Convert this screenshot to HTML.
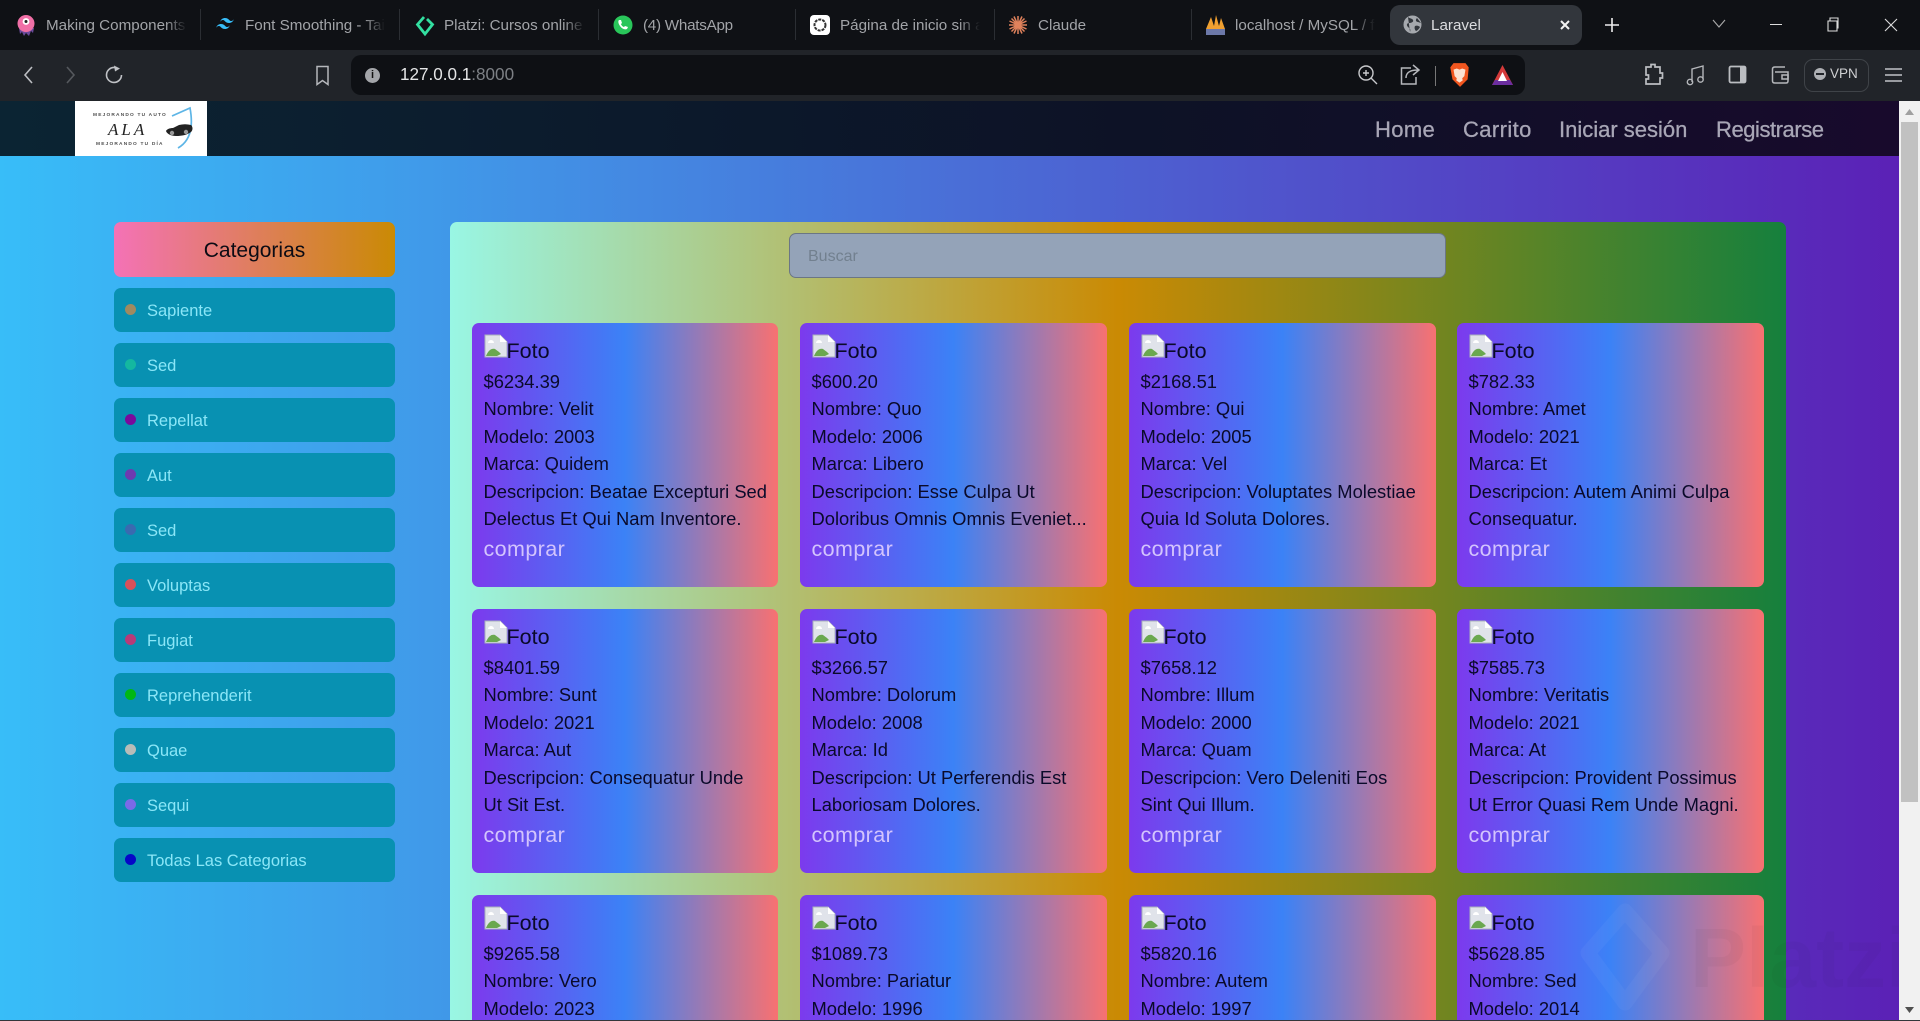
<!DOCTYPE html>
<html lang="es"><head><meta charset="utf-8"><title>Laravel</title>
<style>
*{box-sizing:border-box;margin:0;padding:0}
html,body{width:1920px;height:1021px;overflow:hidden;background:#111317;font-family:"Liberation Sans",sans-serif}
.a{position:absolute}
#tabs{left:0;top:0;width:1920px;height:50px;background:#0f1115}
.tt{position:absolute;top:17px;font-size:15.2px;line-height:18px;color:#a2a4a8;white-space:nowrap;overflow:hidden;height:19px;font-weight:normal}
.fd{-webkit-mask-image:linear-gradient(90deg,#000 85%,transparent);mask-image:linear-gradient(90deg,#000 85%,transparent)}
.sep{position:absolute;top:9px;width:1px;height:31px;background:#2b2e33}
#bar{left:0;top:50px;width:1920px;height:51px;background:#212429}
#url{left:351px;top:5px;width:1174px;height:40px;background:#0e1014;border-radius:10px}
#page{left:0;top:101px;width:1899px;height:919px;overflow:hidden;background:linear-gradient(90deg,#38bdf8,#5b21b6)}
#nav{left:0;top:0;width:1899px;height:55px;background:linear-gradient(90deg,#0b2433,#0d1226 60%,#180a2c)}
.nl{position:absolute;top:15px;font-size:22px;line-height:27px;color:#a8a6b6;white-space:nowrap;-webkit-text-stroke:.3px #a8a6b6}
#cath{left:114px;top:121px;width:281px;height:55px;border-radius:7px;background:linear-gradient(90deg,#f472b6,#ca8a04);text-align:center;font-size:21px;line-height:57px;color:#0b0b14}
.cat{position:absolute;left:114px;width:281px;height:44px;border-radius:7px;background:#0891b2;color:#8ae6f7;font-size:16.5px;line-height:46px;padding-left:33px}
.cat i{position:absolute;left:11px;top:16px;width:11px;height:11px;border-radius:50%}
#main{left:450px;top:121px;width:1336px;height:798px;overflow:hidden;border-radius:7px 7px 0 0;background:linear-gradient(90deg,#99f6e4,#ca8a04 50%,#15803d)}
#search{left:339px;top:11px;width:657px;height:45px;border-radius:7px;border:1px solid #6b7684;background:#94a3b8;color:#72808f;font-size:16px;line-height:45px;padding-left:18px}
.c{position:absolute;width:307px;height:264px;border-radius:7px;background:linear-gradient(90deg,#7c3aed,#3b82f6 50%,#f87171);color:#0a0a2a;font-size:18.35px;line-height:27.5px;padding:11px 0 0 11.5px;overflow:hidden;white-space:nowrap}
.c.l{width:306px}
.c.t{height:125px;border-radius:7px 7px 0 0}
.c .f{display:block;height:33px;font-size:21.5px;line-height:35px;position:relative;margin-bottom:.8px}
.c .f svg{position:absolute;left:0;top:0}
.c .f span{margin-left:23px}
.c .p{display:block;height:27.5px}
.c.t .p:last-child{height:24px}
.c b{display:block;font-weight:normal;font-size:21.5px;line-height:33px;color:#d3c4fd;letter-spacing:.4px}
#sb{left:1899px;top:101px;width:21px;height:919px;background:#f1f1f1}
#th{left:2px;top:21px;width:17px;height:680px;background:#c1c1c1}
#btm{left:0;top:1020px;width:1920px;height:1px;background:#33363a}
</style></head><body>

<div class="a" id="tabs">
<svg class="a" style="left:16px;top:14px" width="20" height="23" viewBox="0 0 20 23"><path d="M3 14l1 6 2-2 2 4 2-3 3 3 2-5 2 2 1-5z" fill="#6a4a9a"/><circle cx="10" cy="9.500" r="8.500" fill="#f06fa6"/><circle cx="10" cy="7.500" r="3.400" fill="#fff"/><circle cx="10" cy="7.500" r="1.500" fill="#222"/></svg>
<div class="tt fd" style="left:46px;width:141px">Making Components</div><div class="sep" style="left:200px"></div>
<svg class="a" style="left:215px;top:17px" width="20" height="16" viewBox="0 0 20 16"><path d="M5 5c1-3 3-4 5-4 4 0 4 3 6 3 1.500 0 2.500-1 3-2-1 3-3 4-5 4-4 0-4-3-6-3-1.500 0-2.500 1-3 2zM1 11c1-3 3-4 5-4 4 0 4 3 6 3 1.500 0 2.500-1 3-2-1 3-3 4-5 4-4 0-4-3-6-3-1.500 0-2.500 1-3 2z" fill="#38bdf8"/></svg>
<div class="tt fd" style="left:245px;width:140px">Font Smoothing - Tail</div><div class="sep" style="left:399px"></div>
<svg class="a" style="left:415px;top:14px" width="20" height="23" viewBox="0 0 20 23"><path d="M9 3L2.500 10.500 10 20l7.500-9.500L12 5" fill="none" stroke="#33e0a1" stroke-width="2.800"/></svg>
<div class="tt fd" style="left:444px;width:141px">Platzi: Cursos online p</div><div class="sep" style="left:598px"></div>
<svg class="a" style="left:613px;top:15px" width="20" height="20" viewBox="0 0 20 20"><circle cx="10" cy="10" r="9.500" fill="#29c65a"/><path d="M6 5c-1 1-1 3 1 6s5 4 7 3l1-2-3-1-1 1c-1 0-3-2-3-3l1-1-1-3z" fill="#fff"/></svg>
<div class="tt" style="left:643px;width:100px;letter-spacing:-.25px">(4) WhatsApp</div><div class="sep" style="left:795px"></div>
<div class="a" style="left:810px;top:15px;width:20px;height:20px;border-radius:4px;background:#fff"></div>
<svg class="a" style="left:812px;top:17px" width="16" height="16" viewBox="0 0 16 16"><circle cx="8" cy="8" r="5.500" fill="none" stroke="#333" stroke-width="2" stroke-dasharray="3 1"/></svg>
<div class="tt fd" style="left:840px;width:140px">Página de inicio sin a</div><div class="sep" style="left:994px"></div>
<svg class="a" style="left:1008px;top:15px" width="20" height="20" viewBox="0 0 20 20"><path d="M10 1v18M1 10h18M3.500 3.500l13 13M16.500 3.500l-13 13M6 1.500l8 17M14 1.500l-8 17M1.500 6l17 8M18.500 6l-17 8" stroke="#e0825c" stroke-width="1.500"/></svg>
<div class="tt" style="left:1038px;width:60px">Claude</div><div class="sep" style="left:1191px"></div>
<svg class="a" style="left:1205px;top:14px" width="21" height="22" viewBox="0 0 21 22"><path d="M1 15L6 3l3 9 2-11 3 11 2-8 4 11z" fill="#f0a030"/><rect x="1" y="15" width="19" height="6" fill="#6c78a8"/></svg>
<div class="tt fd" style="left:1235px;width:140px">localhost / MySQL / f</div>
<div class="a" style="left:1390px;top:5px;width:192px;height:40px;border-radius:10px;background:#32363c"></div>
<svg class="a" style="left:1403px;top:15px" width="19" height="19" viewBox="0 0 19 19"><circle cx="9.500" cy="9.500" r="9" fill="#a6a9ae"/><path d="M5 2c2 2 4 1 5 3s-2 3-4 3-3 2-1 4 3 2 2 5M14 3c-2 2-1 4 1 4l3 1M12 11c2-1 4 0 5 1-1 2-3 4-4 4-1-1-2-3-1-5z" fill="#32363c"/></svg>
<div class="tt" style="left:1431px;color:#dcdde0">Laravel</div>
<svg class="a" style="left:1559px;top:19px" width="12" height="12" viewBox="0 0 12 12"><path d="M2 2l8 8M10 2l-8 8" stroke="#f2f2f2" stroke-width="2"/></svg>
<svg class="a" style="left:1604px;top:17px" width="16" height="16" viewBox="0 0 16 16"><path d="M8 1v14M1 8h14" stroke="#eee" stroke-width="1.600"/></svg>
<svg class="a" style="left:1712px;top:19px" width="14" height="10" viewBox="0 0 14 10"><path d="M1 1l6 7 6-7" fill="none" stroke="#aaa" stroke-width="1.100"/></svg>
<div class="a" style="left:1770px;top:24px;width:12px;height:1px;background:#ddd"></div>
<svg class="a" style="left:1826px;top:17px" width="14" height="15" viewBox="0 0 14 15"><path d="M2 4h9v10H2zM4 4V1h8v10h-1" fill="none" stroke="#ddd" stroke-width="1.100"/></svg>
<svg class="a" style="left:1884px;top:18px" width="14" height="14" viewBox="0 0 14 14"><path d="M1 1l12 12M13 1L1 13" stroke="#ddd" stroke-width="1.100"/></svg>
</div>

<div class="a" id="bar">
<svg class="a" style="left:21px;top:14px" width="14" height="22" viewBox="0 0 14 22"><path d="M11 3L4 11l7 8" fill="none" stroke="#bcbec2" stroke-width="1.600"/></svg>
<svg class="a" style="left:64px;top:14px" width="14" height="22" viewBox="0 0 14 22"><path d="M3 3l7 8-7 8" fill="none" stroke="#55585d" stroke-width="1.600"/></svg>
<svg class="a" style="left:104px;top:15px" width="20" height="20" viewBox="0 0 20 20"><path d="M11 2.500A7.500 7.500 0 1 0 17.500 10" fill="none" stroke="#c0c2c6" stroke-width="1.600"/><path d="M10 .5l6 3-5 3z" fill="#c0c2c6"/></svg>
<svg class="a" style="left:315px;top:15px" width="15" height="21" viewBox="0 0 15 21"><path d="M2 1.500h11v18l-5.500-4-5.500 4z" fill="none" stroke="#b5b7bb" stroke-width="1.500"/></svg>
<div class="a" id="url">
<div class="a" style="left:14px;top:13px;width:15px;height:15px;border-radius:50%;background:#a3a5a9;color:#111;font:bold 11px/15px 'Liberation Sans',sans-serif;text-align:center">i</div>
<div class="a" style="left:49px;top:10px;font-size:17.1px;line-height:20px;color:#e4e5e6;white-space:nowrap">127.0.0.1<span style="color:#7d8085">:8000</span></div>
</div>
<svg class="a" style="left:1357px;top:14px" width="21" height="22" viewBox="0 0 21 22"><circle cx="9" cy="9" r="7" fill="none" stroke="#c8c9cc" stroke-width="1.400"/><path d="M14 14l6 6M9 6v6M6 9h6" stroke="#c8c9cc" stroke-width="1.400"/></svg>
<svg class="a" style="left:1399px;top:14px" width="22" height="22" viewBox="0 0 22 22"><path d="M12 4H2.500v16H17v-7M7 14c0-5 3-8 12-8M14 1l6 5-6 5" fill="none" stroke="#b5b7bb" stroke-width="1.500"/></svg>
<div class="a" style="left:1435px;top:16px;width:1px;height:20px;background:#777"></div>
<svg class="a" style="left:1449px;top:12px" width="21" height="26" viewBox="0 0 19 24"><path d="M4 1h11l3 4-1 11-7 7-7-7L1 5z" fill="#f1561f"/><path d="M4 7l3-1 2.500 1L12 6l3 1-1 6-2 2 .5 2-3 2-3-2 .5-2-2-2z" fill="#fbe2d2"/></svg>
<svg class="a" style="left:1491px;top:14px" width="23" height="22" viewBox="0 0 23 22"><path d="M11.500 1L22 21H1z" fill="#d33a3a"/><path d="M1 21h21l-3-5H4z" fill="#6b2ea0"/><path d="M11.500 8l4.500 9H7z" fill="#fff"/></svg>
<svg class="a" style="left:1643px;top:13px" width="21" height="23" viewBox="0 0 21 23"><path d="M3 4h5V1.500h4V4h5v6h2.500v5H17v6H3v-5h2.500v-4H3z" fill="none" stroke="#bbbdc1" stroke-width="1.700"/></svg>
<svg class="a" style="left:1686px;top:14px" width="19" height="22" viewBox="0 0 19 22"><path d="M6 18V5l11-3v13" fill="none" stroke="#b5b7bb" stroke-width="1.400"/><circle cx="4" cy="18" r="2.700" fill="none" stroke="#b5b7bb" stroke-width="1.400"/><circle cx="14.500" cy="15.500" r="2.700" fill="none" stroke="#b5b7bb" stroke-width="1.400"/></svg>
<svg class="a" style="left:1728px;top:15px" width="19" height="20" viewBox="0 0 19 20"><rect x="1.500" y="1.500" width="16" height="16" rx="1.500" fill="none" stroke="#bbbdc1" stroke-width="1.800"/><rect x="12" y="2" width="5" height="15" fill="#bbbdc1"/></svg>
<svg class="a" style="left:1771px;top:15px" width="19" height="20" viewBox="0 0 19 20"><path d="M14 2H4Q1.500 2 1.500 4v12q0 2 2.500 2h11q2 0 2-2V7H4" fill="none" stroke="#b5b7bb" stroke-width="1.500"/><rect x="11" y="10" width="6" height="4" fill="none" stroke="#b5b7bb" stroke-width="1.500"/></svg>
<div class="a" style="left:1804px;top:9px;width:65px;height:33px;border:1px solid #3f4348;border-radius:9px"></div>
<div class="a" style="left:1814px;top:18px;width:12px;height:12px;border-radius:50%;background:#aeb0b4"></div><div class="a" style="left:1816px;top:23px;width:8px;height:2px;background:#212429"></div>
<div class="a" style="left:1830px;top:16px;font-size:13.500px;line-height:16px;color:#cfd0d2">VPN</div>
<div class="a" style="left:1885px;top:18px;width:17px;height:14px;border-top:2px solid #999ba0;border-bottom:2px solid #999ba0"></div><div class="a" style="left:1885px;top:24px;width:17px;height:2px;background:#999ba0"></div>
</div>

<div class="a" id="page">
<div class="a" id="nav">
<div class="a" style="left:75px;top:0;width:132px;height:55px;background:#fff;overflow:hidden;color:#222;font-family:'Liberation Serif',serif">
<div class="a" style="left:18px;top:12px;font:bold 4.800px/6px 'Liberation Sans',sans-serif;letter-spacing:1.2px;white-space:nowrap;opacity:.8">MEJORANDO TU AUTO</div>
<div class="a" style="left:33px;top:19px;font-size:17px;line-height:20px;font-style:italic;letter-spacing:3px">ALA</div>
<div class="a" style="left:21px;top:41px;font:bold 4.800px/6px 'Liberation Sans',sans-serif;letter-spacing:1.2px;white-space:nowrap;opacity:.8">MEJORANDO TU DÍA</div>
<svg class="a" style="left:87px;top:3px" width="44" height="50" viewBox="0 0 44 50"><path d="M10 12L28 4c3 16 2 32-12 40" fill="none" stroke="#5db5e6" stroke-width="1.700"/><path d="M4 27c1-2 4-3 7-3l6-3c4-1 8-1 12 0 2 2 2 5 0 7-4 3-9 4-15 4-5 0-9-2-10-5z" fill="#222"/><circle cx="10" cy="29" r="2.200" fill="#999"/><circle cx="24" cy="28" r="2.200" fill="#999"/></svg>
</div>
<div class="nl" style="left:1375px;letter-spacing:.35px">Home</div>
<div class="nl" style="left:1463px;letter-spacing:.4px">Carrito</div>
<div class="nl" style="left:1559px">Iniciar sesión</div>
<div class="nl" style="left:1716px;letter-spacing:-.45px">Registrarse</div>
</div>

<div class="a" id="cath">Categorias</div>
<div class="cat" style="top:187px"><i style="background:#a08a60"></i>Sapiente</div>
<div class="cat" style="top:242px"><i style="background:#14b8a0"></i>Sed</div>
<div class="cat" style="top:297px"><i style="background:#7a0a9c"></i>Repellat</div>
<div class="cat" style="top:352px"><i style="background:#6d3ab0"></i>Aut</div>
<div class="cat" style="top:407px"><i style="background:#3a6ab0"></i>Sed</div>
<div class="cat" style="top:462px"><i style="background:#d9505a"></i>Voluptas</div>
<div class="cat" style="top:517px"><i style="background:#b83a78"></i>Fugiat</div>
<div class="cat" style="top:572px"><i style="background:#00b814"></i>Reprehenderit</div>
<div class="cat" style="top:627px"><i style="background:#b8bcb8"></i>Quae</div>
<div class="cat" style="top:682px"><i style="background:#7a6ae8"></i>Sequi</div>
<div class="cat" style="top:737px"><i style="background:#0606c8"></i>Todas Las Categorias</div>

<div class="a" id="main">
<div class="a" id="search">Buscar</div>

<div class="c l" style="left:22px;top:101px"><span class="f"><svg width="24" height="24" viewBox="0 0 24 24"><use href="#bi"/></svg><span>Foto</span></span><span class="p">$6234.39</span><span class="p">Nombre: Velit</span><span class="p">Modelo: 2003</span><span class="p">Marca: Quidem</span><span class="p">Descripcion: Beatae Excepturi Sed</span><span class="p">Delectus Et Qui Nam Inventore.</span><b>comprar</b></div>
<div class="c" style="left:350px;top:101px"><span class="f"><svg width="24" height="24" viewBox="0 0 24 24"><use href="#bi"/></svg><span>Foto</span></span><span class="p">$600.20</span><span class="p">Nombre: Quo</span><span class="p">Modelo: 2006</span><span class="p">Marca: Libero</span><span class="p">Descripcion: Esse Culpa Ut</span><span class="p">Doloribus Omnis Omnis Eveniet...</span><b>comprar</b></div>
<div class="c" style="left:679px;top:101px"><span class="f"><svg width="24" height="24" viewBox="0 0 24 24"><use href="#bi"/></svg><span>Foto</span></span><span class="p">$2168.51</span><span class="p">Nombre: Qui</span><span class="p">Modelo: 2005</span><span class="p">Marca: Vel</span><span class="p">Descripcion: Voluptates Molestiae</span><span class="p">Quia Id Soluta Dolores.</span><b>comprar</b></div>
<div class="c" style="left:1007px;top:101px"><span class="f"><svg width="24" height="24" viewBox="0 0 24 24"><use href="#bi"/></svg><span>Foto</span></span><span class="p">$782.33</span><span class="p">Nombre: Amet</span><span class="p">Modelo: 2021</span><span class="p">Marca: Et</span><span class="p">Descripcion: Autem Animi Culpa</span><span class="p">Consequatur.</span><b>comprar</b></div>

<div class="c l" style="left:22px;top:387px"><span class="f"><svg width="24" height="24" viewBox="0 0 24 24"><use href="#bi"/></svg><span>Foto</span></span><span class="p">$8401.59</span><span class="p">Nombre: Sunt</span><span class="p">Modelo: 2021</span><span class="p">Marca: Aut</span><span class="p">Descripcion: Consequatur Unde</span><span class="p">Ut Sit Est.</span><b>comprar</b></div>
<div class="c" style="left:350px;top:387px"><span class="f"><svg width="24" height="24" viewBox="0 0 24 24"><use href="#bi"/></svg><span>Foto</span></span><span class="p">$3266.57</span><span class="p">Nombre: Dolorum</span><span class="p">Modelo: 2008</span><span class="p">Marca: Id</span><span class="p">Descripcion: Ut Perferendis Est</span><span class="p">Laboriosam Dolores.</span><b>comprar</b></div>
<div class="c" style="left:679px;top:387px"><span class="f"><svg width="24" height="24" viewBox="0 0 24 24"><use href="#bi"/></svg><span>Foto</span></span><span class="p">$7658.12</span><span class="p">Nombre: Illum</span><span class="p">Modelo: 2000</span><span class="p">Marca: Quam</span><span class="p">Descripcion: Vero Deleniti Eos</span><span class="p">Sint Qui Illum.</span><b>comprar</b></div>
<div class="c" style="left:1007px;top:387px"><span class="f"><svg width="24" height="24" viewBox="0 0 24 24"><use href="#bi"/></svg><span>Foto</span></span><span class="p">$7585.73</span><span class="p">Nombre: Veritatis</span><span class="p">Modelo: 2021</span><span class="p">Marca: At</span><span class="p">Descripcion: Provident Possimus</span><span class="p">Ut Error Quasi Rem Unde Magni.</span><b>comprar</b></div>

<div class="c l t" style="left:22px;top:673px"><span class="f"><svg width="24" height="24" viewBox="0 0 24 24"><use href="#bi"/></svg><span>Foto</span></span><span class="p">$9265.58</span><span class="p">Nombre: Vero</span><span class="p">Modelo: 2023</span></div>
<div class="c t" style="left:350px;top:673px"><span class="f"><svg width="24" height="24" viewBox="0 0 24 24"><use href="#bi"/></svg><span>Foto</span></span><span class="p">$1089.73</span><span class="p">Nombre: Pariatur</span><span class="p">Modelo: 1996</span></div>
<div class="c t" style="left:679px;top:673px"><span class="f"><svg width="24" height="24" viewBox="0 0 24 24"><use href="#bi"/></svg><span>Foto</span></span><span class="p">$5820.16</span><span class="p">Nombre: Autem</span><span class="p">Modelo: 1997</span></div>
<div class="c t" style="left:1007px;top:673px"><span class="f"><svg width="24" height="24" viewBox="0 0 24 24"><use href="#bi"/></svg><span>Foto</span></span><span class="p">$5628.85</span><span class="p">Nombre: Sed</span><span class="p">Modelo: 2014</span></div>
</div>
</div>

<svg width="0" height="0" style="position:absolute"><defs><g id="bi"><path d="M1 1h15l7 7v15H1z" fill="#e0e3ea" stroke="#a9b0bb" stroke-width="1"/><path d="M16 1v7h7z" fill="#fff"/><path d="M2 22c2-5 5-8 9-7l4 3 2 2-4 2z" fill="#6aa84f"/><path d="M4 9a3 3 0 0 1 6 0z" fill="#fff"/></g></defs></svg>

<svg class="a" width="330" height="116" viewBox="0 0 330 116" style="left:1580px;top:903px;opacity:.035"><path d="M45 8L82 50 45 100 8 50z" fill="none" stroke="#fff" stroke-width="15" stroke-linejoin="round"/><text x="110" y="84" font-family="Liberation Sans, sans-serif" font-size="84" font-weight="bold" fill="#222">Platzi</text></svg>

<div class="a" id="sb"><div class="a" id="th"></div>
<svg class="a" style="left:5px;top:7px" width="11" height="8" viewBox="0 0 11 8"><path d="M5.500 1L10 7H1z" fill="#a0a0a0"/></svg>
<svg class="a" style="left:5px;top:905px" width="11" height="8" viewBox="0 0 11 8"><path d="M5.500 7L10 1H1z" fill="#505050"/></svg>
</div>
<div class="a" id="btm"></div>
</body></html>
